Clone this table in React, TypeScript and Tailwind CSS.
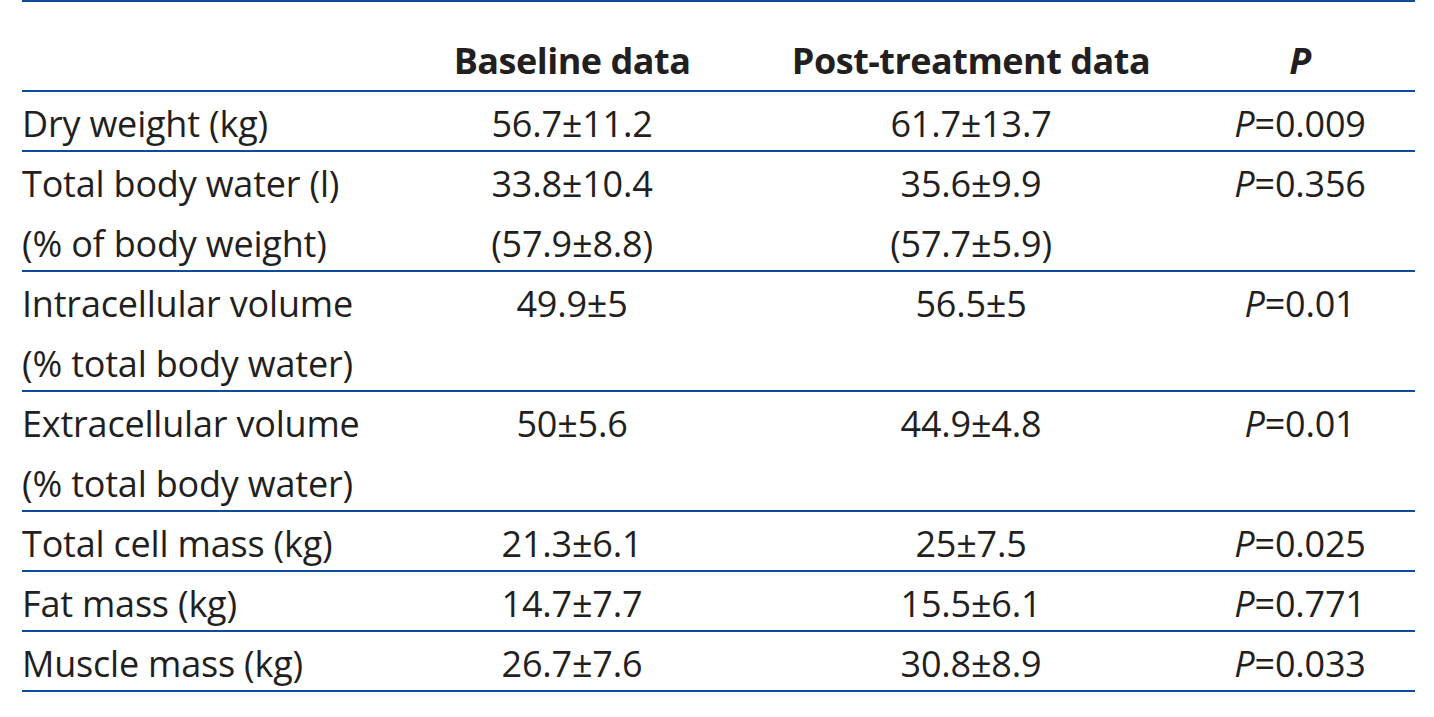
const rows: { label: string[]; base: string[]; post: string[]; p: string }[] = [
  { label: ["Dry weight (kg)"], base: ["56.7±11.2"], post: ["61.7±13.7"], p: "0.009" },
  {
    label: ["Total body water (l)", "(% of body weight)"],
    base: ["33.8±10.4", "(57.9±8.8)"],
    post: ["35.6±9.9", "(57.7±5.9)"],
    p: "0.356",
  },
  {
    label: ["Intracellular volume", "(% total body water)"],
    base: ["49.9±5"],
    post: ["56.5±5"],
    p: "0.01",
  },
  {
    label: ["Extracellular volume", "(% total body water)"],
    base: ["50±5.6"],
    post: ["44.9±4.8"],
    p: "0.01",
  },
  { label: ["Total cell mass (kg)"], base: ["21.3±6.1"], post: ["25±7.5"], p: "0.025" },
  { label: ["Fat mass (kg)"], base: ["14.7±7.7"], post: ["15.5±6.1"], p: "0.771" },
  { label: ["Muscle mass (kg)"], base: ["26.7±7.6"], post: ["30.8±8.9"], p: "0.033" },
];

const grid = "grid grid-cols-[350px_400px_398px_245px]";

export default function App() {
  return (
    <div
      className="min-h-[717px] bg-white text-[#231f20] text-[36px] tracking-[-0.2px]"
      style={{ fontFamily: '"Open Sans", "Noto Sans", sans-serif' }}
    >
      <div className="ml-[22px] w-[1393px]">
        {/* header */}
        <div className={`${grid} border-t-2 border-b-2 border-[#0c4c9c] pt-[30px] leading-[58px] font-bold tracking-[-0.5px]`}>
          <div />
          <div className="text-center">Baseline data</div>
          <div className="text-center">Post-treatment data</div>
          <div className="text-center pl-[15px] italic">P</div>
        </div>

        {rows.map((r, i) => (
          <div
            key={i}
            className={`${grid} border-b-2 border-[#0c4c9c] pt-[2px] leading-[60px] ${
              r.label.length > 1 ? "h-[120px]" : "h-[60px]"
            }`}
          >
            <div>
              {r.label.map((t) => (
                <div key={t}>{t}</div>
              ))}
            </div>
            <div className="text-center">
              {r.base.map((t) => (
                <div key={t}>{t}</div>
              ))}
            </div>
            <div className="text-center">
              {r.post.map((t) => (
                <div key={t}>{t}</div>
              ))}
            </div>
            <div className="text-center pl-[15px]">
              <span className="italic">P</span>=0.{r.p.slice(2)}
            </div>
          </div>
        ))}
      </div>
    </div>
  );
}
